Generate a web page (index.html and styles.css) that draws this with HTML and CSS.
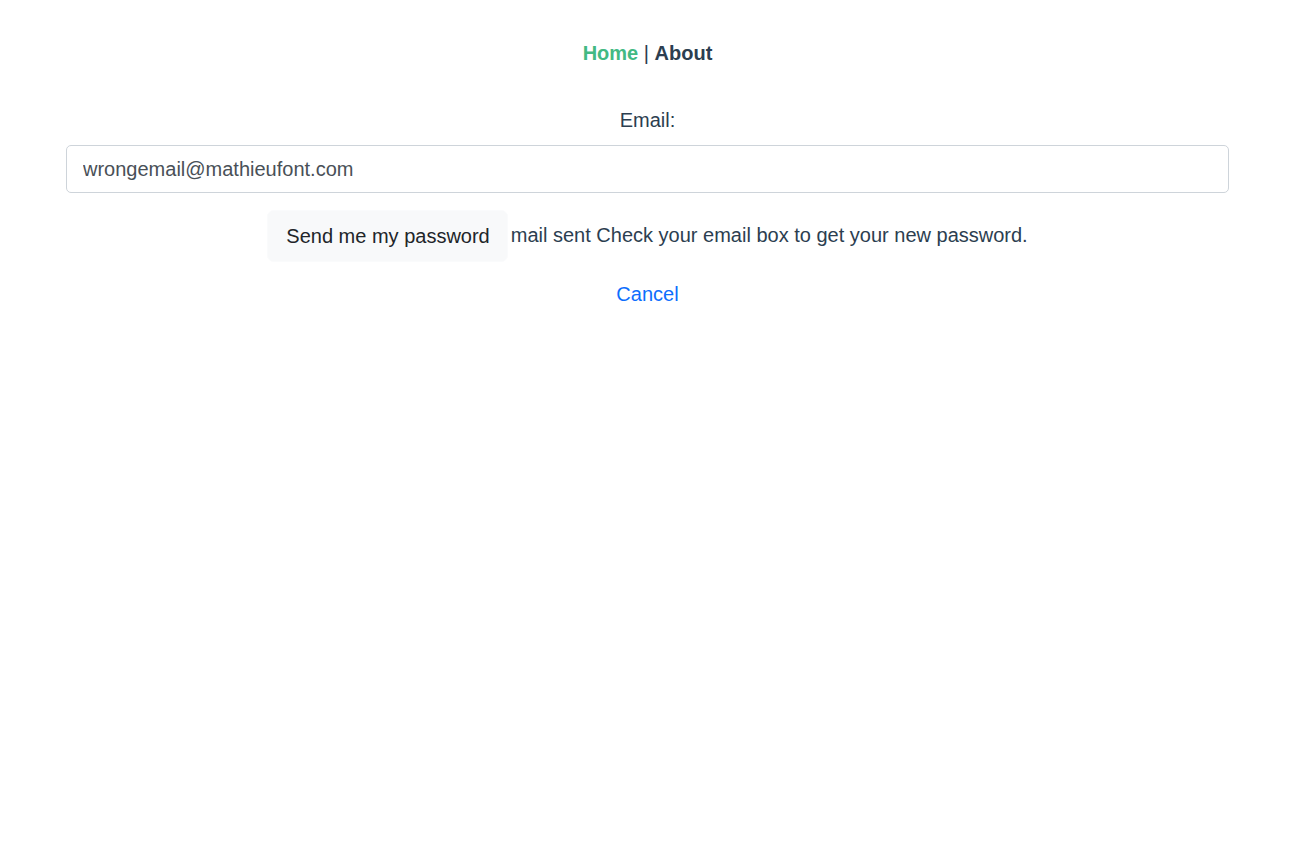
FILE: index.html
```html
<!DOCTYPE html>
<html lang="en">
<head>
<meta charset="utf-8">
<title>Forgot password</title>
<link rel="stylesheet" href="styles.css">
</head>
<body>
<div class="app">
  <nav class="nav">
    <a class="nav-link active" href="#">Home</a> | <a class="nav-link" href="#">About</a>
  </nav>
  <form class="form">
    <label class="label" for="email">Email:</label>
    <input class="input" id="email" type="email" value="wrongemail@mathieufont.com">
    <div class="actions">
      <button class="btn" type="button">Send me my password</button>
      <span class="msg">mail sent Check your email box to get your new password.</span>
    </div>
    <a class="cancel" href="#">Cancel</a>
  </form>
</div>
</body>
</html>
```
FILE: styles.css
```css
html, body {
  margin: 0;
  padding: 0;
  background: #fff;
}
.app {
  font-family: "Liberation Sans", Arial, Helvetica, sans-serif;
  font-size: 20px;
  line-height: 30px;
  color: #2c3e50;
  text-align: center;
}
.nav {
  padding: 38px 0 37px;
}
.nav-link {
  font-weight: bold;
  color: #2c3e50;
  text-decoration: none;
}
.nav-link.active {
  color: #42b983;
}
.form {
  display: flex;
  flex-direction: column;
  align-items: center;
  padding: 0 66px;
}
.label {
  display: block;
  margin-bottom: 10px;
}
.input {
  box-sizing: border-box;
  width: 100%;
  height: 48px;
  padding: 0 16px;
  font: inherit;
  color: #495057;
  border: 1px solid #ced4da;
  border-radius: 5px;
  background: #fff;
}
.actions {
  display: flex;
  align-items: center;
  gap: 3px;
  margin-top: 17px;
}
.btn {
  font: inherit;
  color: #212529;
  background: #f8f9fa;
  border: 1px solid #fafbfc;
  border-radius: 7px;
  padding: 10px 17px 10px 18px;
}
.msg {
  color: #2c3e50;
  margin-bottom: 3px;
}
.cancel {
  margin-top: 17px;
  color: #0d6efd;
  text-decoration: none;
}
```
